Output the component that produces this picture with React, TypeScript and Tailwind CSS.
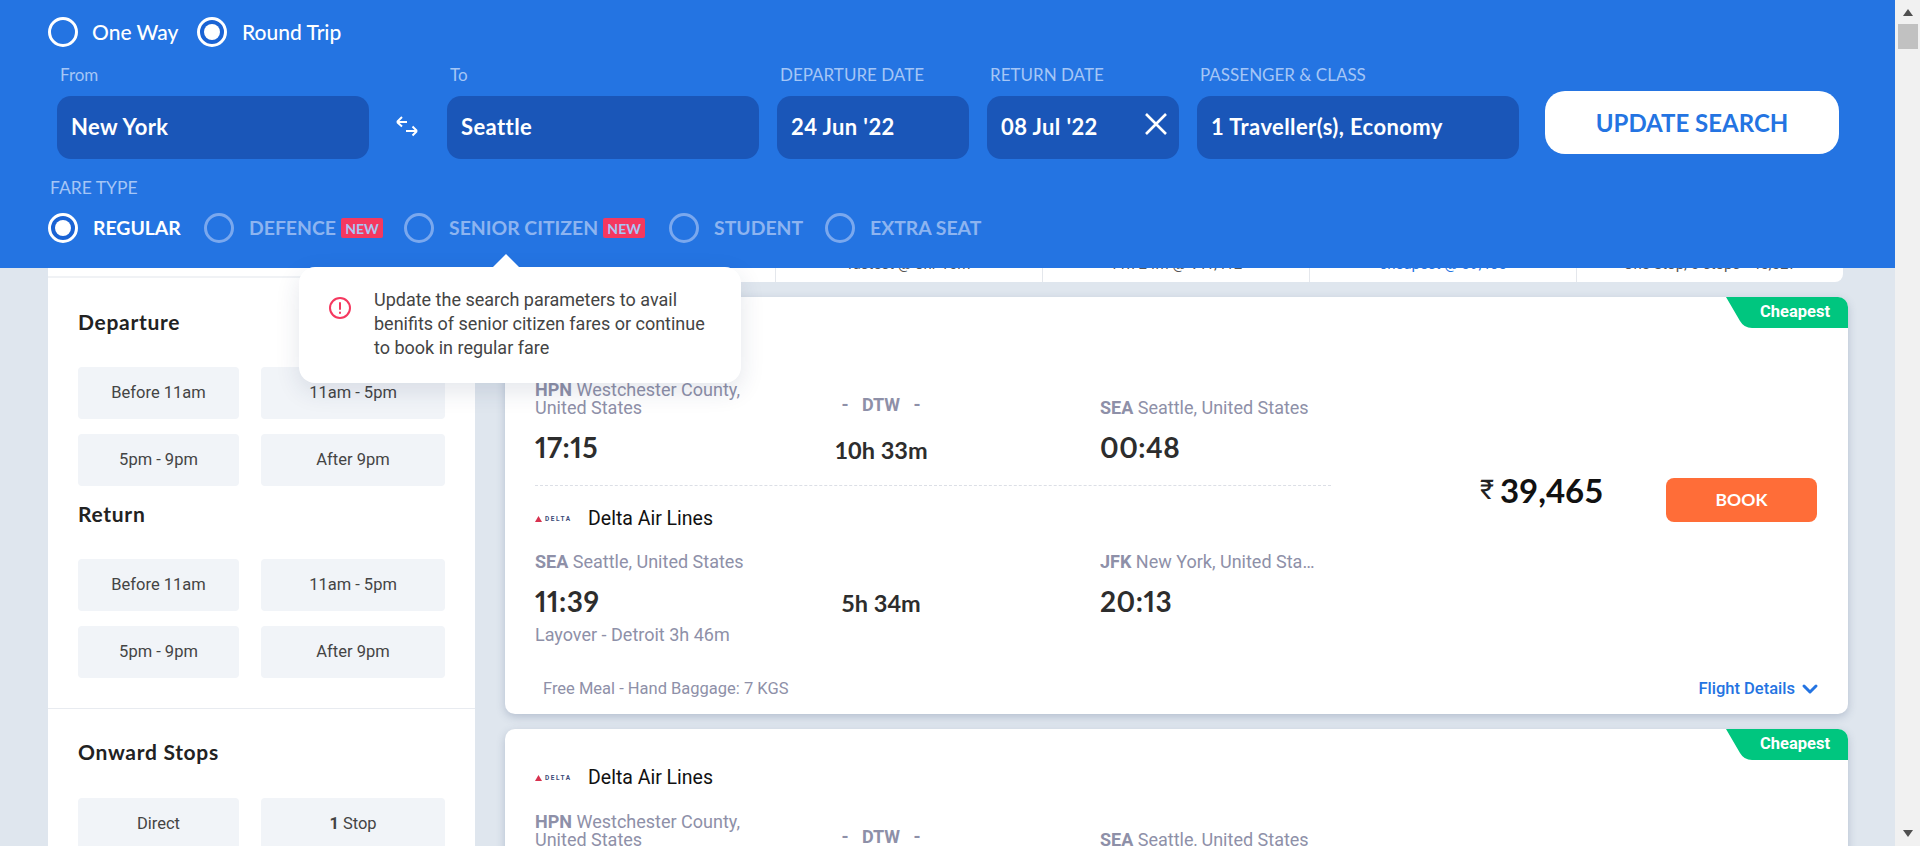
import type { ReactNode } from 'react';
import { ChevronDown } from 'lucide-react';

const QS = "font-['Lato','Noto_Sans',sans-serif]";

const Radio = ({ checked, dim }: { checked?: boolean; dim?: boolean }) => (
  <span
    className={`flex h-[30px] w-[30px] shrink-0 items-center justify-center rounded-full border-[3px] ${
      dim ? 'border-[#7aa8ee]' : 'border-white'
    } ${checked ? 'bg-[#1a63d4]' : ''}`}
  >
    {checked && <span className="h-[16px] w-[16px] rounded-full bg-white" />}
  </span>
);

const NewBadge = () => (
  <span className="ml-[5px] flex h-[20px] w-[42px] items-center justify-center rounded-[2px] bg-[#f5385f] text-[14px] font-bold text-[#a9c6f5]">
    NEW
  </span>
);

const Field = ({ label, value, className, close }: { label: string; value: string; className: string; close?: boolean }) => (
  <div className={className}>
    <div className="mb-[9px] h-[24px] pl-[3px] text-[17px] leading-[24px] text-[#a5c6f6]">{label}</div>
    <div className="flex h-[63px] items-center justify-between rounded-[14px] bg-[#1a56b8] pb-[2px] pl-[14px] pr-[11px] text-[22px] font-bold tracking-[0.4px] text-white">
      <span className="whitespace-nowrap">{value}</span>
      {close && (
        <svg width="24" height="24" viewBox="0 0 24 24" fill="none" stroke="white" strokeWidth="2.6" className="-mt-[6px] shrink-0">
          <path d="M2 2l20 20M22 2L2 22" />
        </svg>
      )}
    </div>
  </div>
);

const FareOption = ({ label, checked, badge, className }: { label: string; checked?: boolean; badge?: boolean; className: string }) => (
  <div className={`flex items-center ${className}`}>
    <Radio checked={checked} dim={!checked} />
    <span className={`ml-[15px] text-[19.4px] font-bold ${checked ? 'text-white' : 'text-[#8db4f0]'}`}>{label}</span>
    {badge && <NewBadge />}
  </div>
);

const Header = () => (
  <div className={`absolute inset-x-0 top-0 z-10 h-[268px] bg-[#2474e2] pl-[48px] ${QS}`}>
    <div className="flex h-[63px] items-center text-[21px] font-medium text-white">
      <Radio />
      <span className="ml-[14px] w-[105px]">One Way</span>
      <Radio checked />
      <span className="ml-[15px]">Round Trip</span>
    </div>
    <div className="flex items-start pl-[9px]">
      <Field label="From" value="New York" className="w-[312px]" />
      <svg width="22" height="21" viewBox="0 0 22 21" fill="none" stroke="white" strokeWidth="2" className="ml-[27px] mr-[29px] mt-[53px] shrink-0">
        <path d="M1 6H11M1 6l5-5M1 6l5 4.500M10 15H21M21 15l-4.500-4.500M21 15l-4.500 4.500" />
      </svg>
      <Field label="To" value="Seattle" className="w-[312px]" />
      <Field label="DEPARTURE DATE" value="24 Jun '22" className="ml-[18px] w-[192px]" />
      <Field label="RETURN DATE" value="08 Jul '22" close className="ml-[18px] w-[192px]" />
      <Field label="PASSENGER & CLASS" value="1 Traveller(s), Economy" className="ml-[18px] w-[322px]" />
      <button className="ml-[26px] mt-[28px] flex h-[63px] w-[294px] items-center justify-center rounded-[20px] bg-white text-[24px] font-bold text-[#2474e2]">
        UPDATE SEARCH
      </button>
    </div>
    <div className="mt-[17px] pl-[2px] text-[17.500px] leading-[24px] text-[#a5c6f6]">FARE TYPE</div>
    <div className="mt-[13px] flex h-[30px] items-center">
      <FareOption label="REGULAR" checked className="w-[156px]" />
      <FareOption label="DEFENCE" badge className="w-[200px]" />
      <FareOption label="SENIOR CITIZEN" badge className="w-[265px]" />
      <FareOption label="STUDENT" className="w-[156px]" />
      <FareOption label="EXTRA SEAT" className="" />
    </div>
  </div>
);

const Tooltip = () => (
  <div className="absolute left-[299px] top-[267px] z-20 flex h-[116px] w-[442px] rounded-[16px] bg-white pl-[29px] pt-[21px] shadow-[0_8px_24px_rgba(30,50,90,0.12)]">
    <span className="absolute -top-[13px] left-[194px] h-0 w-0 border-x-[13px] border-b-[13px] border-x-transparent border-b-white" />
    <svg width="24" height="24" viewBox="0 0 24 24" fill="none" stroke="#f5385f" strokeWidth="2" strokeLinecap="round" className="mt-[8px] shrink-0">
      <circle cx="12" cy="12" r="10" />
      <path d="M12 7v6M12 16.500v.5" />
    </svg>
    <p className="ml-[22px] w-[345px] text-[18px] leading-[24px] text-[#444]">
      Update the search parameters to avail benifits of senior citizen fares or continue to book in regular fare
    </p>
  </div>
);

const FilterBtn = ({ children }: { children: ReactNode }) => (
  <div className="flex h-[52px] items-center justify-center rounded-[4px] bg-[#f1f4f8] text-[16.500px] text-[#444]">{children}</div>
);

const TimeGrid = () => (
  <div className="grid grid-cols-[161px_184px] gap-x-[22px] gap-y-[15px]">
    <FilterBtn>Before 11am</FilterBtn>
    <FilterBtn>11am - 5pm</FilterBtn>
    <FilterBtn>5pm - 9pm</FilterBtn>
    <FilterBtn>After 9pm</FilterBtn>
  </div>
);

const headingClass = `flex items-center text-[21px] font-bold tracking-[0.7px] text-[#222] ${QS}`;

const Sidebar = () => (
  <div className="w-[427px] shrink-0 bg-white">
    <div className="h-[48px] border-b-2 border-[#f0f2f5]" />
    <div className="border-b border-[#e8ebf0] pb-[30px] pl-[30px]">
      <h3 className={`h-[89px] pb-[2px] ${headingClass}`}>Departure</h3>
      <TimeGrid />
      <h3 className={`h-[73px] pb-[17px] ${headingClass}`}>Return</h3>
      <TimeGrid />
    </div>
    <div className="pl-[30px]">
      <h3 className={`h-[89px] pb-[3px] ${headingClass}`}>Onward Stops</h3>
      <div className="grid grid-cols-[161px_184px] gap-x-[22px]">
        <FilterBtn>Direct</FilterBtn>
        <FilterBtn>
          <b className="mr-1">1</b> Stop
        </FilterBtn>
      </div>
    </div>
  </div>
);

const Summary = () => (
  <div className="grid h-[52px] w-[1338px] grid-cols-[270px_267px_267px_267px_267px] rounded-b-[8px] bg-white text-center text-[15px] text-[#555]">
    <div className="h-full" />
    {['fastest @ 8hr 10m', '11h 24m @ ₹41,412', 'cheapest @ 39,465', 'One Stop, 0 stops - 45,527'].map((s, i) => (
      <div key={s} className={`h-full border-l border-[#e4e7ec] pt-[23px] ${i === 2 ? 'text-[#2474e2]' : ''}`}>{s}</div>
    ))}
  </div>
);

const DeltaLogo = () => (
  <span className="flex w-[38px] items-center gap-[3px]">
    <svg width="7" height="6" viewBox="0 0 7 6" className="shrink-0">
      <path d="M3.500 0l3.500 6H0z" fill="#d8324f" />
    </svg>
    <span className="text-[6.500px] font-bold leading-[6px] tracking-[1.6px] text-[#3b4a78]">DELTA</span>
  </span>
);

const Airline = ({ className }: { className: string }) => (
  <div className={`flex items-center gap-[15px] text-[19.500px] leading-[24px] text-[#111] ${className}`}>
    <DeltaLogo />
    <span>Delta Air Lines</span>
  </div>
);

const Time = ({ children }: { children: ReactNode }) => (
  <div className={`text-[28px] font-bold leading-[34px] tracking-[0.5px] text-[#2d2d2d] proportional-nums ${QS}`}>{children}</div>
);

const Duration = ({ children }: { children: ReactNode }) => (
  <div className={`text-[23.500px] font-bold leading-[28px] text-[#2d2d2d] ${QS}`}>{children}</div>
);

const Place = ({ code, name, className }: { code: string; name: string; className?: string }) => (
  <div className={`text-[18px] leading-[18px] text-[#8e90a8] ${className ?? ''}`}>
    <b className="font-bold">{code}</b> {name}
  </div>
);

const Cheapest = () => (
  <div className="absolute right-0 top-0 flex h-[31px] w-[122px] items-center justify-end pr-[18px] text-[16.500px] font-bold text-white">
    <svg width="122" height="31" viewBox="0 0 122 31" className="absolute inset-0">
      <path d="M0 0H112a10 10 0 0 1 10 10V31H26Q18 31 14 24Z" fill="#00c67f" />
    </svg>
    <span className="relative">Cheapest</span>
  </div>
);

const FlightCard = () => (
  <div className="relative h-[417px] w-[1343px] shrink-0 rounded-[10px] bg-white pl-[30px] pr-[31px] shadow-[0_3px_8px_rgba(60,80,120,0.25)]">
    <Cheapest />
    <div className="flex items-start">
      <div className="w-[796px] shrink-0">
        <Airline className="mt-[37px] h-[24px]" />
        <div className="grid grid-cols-[280px_132px_1fr] pt-[23px]">
          <div>
            <Place code="HPN" name="Westchester County, United States" className="w-[230px]" />
            <div className="mt-[13px]"><Time>17:15</Time></div>
          </div>
          <div className="pt-[12px] text-center">
            <div className="text-[18px] font-bold leading-[24px] text-[#8e90a8]">-&nbsp;&nbsp;&nbsp;DTW&nbsp;&nbsp;&nbsp;-</div>
            <div className="mt-[19px]"><Duration>10h 33m</Duration></div>
          </div>
          <div className="pl-[153px] pt-[18px]">
            <Place code="SEA" name="Seattle, United States" className="whitespace-nowrap" />
            <div className="mt-[13px]"><Time>00:48</Time></div>
          </div>
        </div>
        <div className="mt-[21px] border-t border-dashed border-[#dcdfe6]" />
        <Airline className="mt-[21px] h-[24px]" />
        <div className="grid grid-cols-[280px_132px_1fr] pt-[22px]">
          <div>
            <Place code="SEA" name="Seattle, United States" className="whitespace-nowrap" />
            <div className="mt-[13px]"><Time>11:39</Time></div>
            <div className="mt-[8px] whitespace-nowrap text-[18px] leading-[18px] text-[#8e90a8]">Layover - Detroit 3h 46m</div>
          </div>
          <div className="pt-[36px] text-center">
            <Duration>5h 34m</Duration>
          </div>
          <div className="pl-[153px]">
            <Place code="JFK" name="New York, United States" className="w-[215px] truncate" />
            <div className="mt-[13px]"><Time>20:13</Time></div>
          </div>
        </div>
      </div>
      <div className={`ml-[149px] mt-[181px] flex h-[44px] w-[186px] items-center pb-[18px] text-[#111] ${QS}`}>
        <span className="-mt-[1px] mr-[6px] font-['Roboto',sans-serif] text-[27px] leading-none text-[#222]">₹</span>
        <span className="text-[33px] font-bold">39,465</span>
      </div>
      <button className={`mt-[181px] flex h-[44px] w-[151px] items-center justify-center rounded-[8px] bg-[#ff6d38] text-[17.500px] font-bold text-white ${QS}`}>
        BOOK
      </button>
    </div>
    <div className="mt-[33px] flex h-[24px] items-center justify-between pl-[8px]">
      <span className="text-[16.500px] text-[#8e90a8]">Free Meal - Hand Baggage: 7 KGS</span>
      <span className="-mr-[5px] flex items-center gap-[3px] text-[16.500px] font-medium text-[#2474e2]">
        Flight Details
        <ChevronDown size={24} strokeWidth={3} />
      </span>
    </div>
  </div>
);

export default function App() {
  return (
    <div className="relative flex h-[846px] w-[1920px] overflow-hidden bg-[#dfe6ee] font-['Roboto',sans-serif]">
      <div className="relative flex-1 overflow-hidden">
        <Header />
        <Tooltip />
        <div className="flex pl-[48px] pt-[230px]">
          <Sidebar />
          <div className="ml-[30px] flex flex-col gap-[15px]">
            <Summary />
            <FlightCard />
            <FlightCard />
          </div>
        </div>
      </div>
      <div className="flex w-[25px] flex-col items-center bg-[#f1f1f1]">
        <span className="mt-[9px] h-0 w-0 border-x-[5px] border-b-[7px] border-x-transparent border-b-[#505050]" />
        <span className="mt-[8px] h-[25px] w-[20px] bg-[#c1c1c1]" />
        <span className="mb-[9px] mt-auto h-0 w-0 border-x-[5px] border-t-[7px] border-x-transparent border-t-[#505050]" />
      </div>
    </div>
  );
}
